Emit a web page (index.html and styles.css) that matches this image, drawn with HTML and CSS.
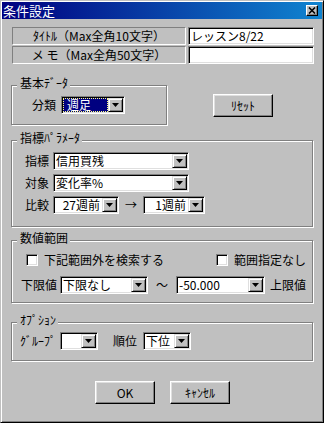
FILE: index.html
```html
<!DOCTYPE html>
<html lang="ja">
<head>
    <meta charset="UTF-8">
    <title>条件設定</title>
    <link rel="stylesheet" href="styles.css">
</head>
<body>
    <div class="window">
        <div class="titlebar">
            <span class="title">条件設定</span>
            <span class="close">
                <svg width="8" height="7" viewBox="0 0 8 7"><path d="M1 0.5 L7 6.5 M7 0.5 L1 6.5" stroke="#000" stroke-width="1.6" fill="none"/></svg>
            </span>
        </div>

        <div class="content">
            <div class="field-row">
                <div class="static">ﾀｲﾄﾙ（Max全角10文字）</div>
                <div class="input">レッスン8/22</div>
            </div>
            <div class="field-row">
                <div class="static">メ モ（Max全角50文字）</div>
                <div class="input"></div>
            </div>

            <!-- basic data + reset -->
            <div class="basic-row">
                <div class="group group-basic">
                    <span class="legend">基本ﾃﾞｰﾀ</span>
                    <div class="line line-basic">
                        <span class="label lbl-class">分類</span>
                        <div class="combo combo-class">
                            <span class="val selected">週足</span><span class="drop"></span>
                        </div>
                    </div>
                </div>
                <button class="btn btn-reset">ﾘｾｯﾄ</button>
            </div>

            <!-- indicator params -->
            <div class="group group-param">
                <span class="legend">指標ﾊﾟﾗﾒｰﾀ</span>
                <div class="line">
                    <span class="label lbl-param">指標</span>
                    <div class="combo combo-wide"><span class="val">信用買残</span><span class="drop"></span></div>
                </div>
                <div class="line">
                    <span class="label lbl-param">対象</span>
                    <div class="combo combo-wide"><span class="val">変化率%</span><span class="drop"></span></div>
                </div>
                <div class="line">
                    <span class="label lbl-param">比較</span>
                    <div class="combo combo-from"><span class="val right">27週前</span><span class="drop"></span></div>
                    <span class="sep sep-arrow">→</span>
                    <div class="combo combo-to"><span class="val right">1週前</span><span class="drop"></span></div>
                </div>
            </div>

            <!-- numeric range -->
            <div class="group group-range">
                <span class="legend">数値範囲</span>
                <div class="line line-checks">
                    <label class="check-item check-first"><span class="box"></span>下記範囲外を検索する</label>
                    <label class="check-item"><span class="box"></span>範囲指定なし</label>
                </div>
                <div class="line line-limits">
                    <span class="label lbl-limit">下限値</span>
                    <div class="combo combo-limit"><span class="val">下限なし</span><span class="drop"></span></div>
                    <span class="sep sep-tilde">～</span>
                    <div class="combo combo-limit2"><span class="val">-50.000</span><span class="drop"></span></div>
                    <span class="label lbl-upper">上限値</span>
                </div>
            </div>

            <!-- options -->
            <div class="group group-option">
                <span class="legend">ｵﾌﾟｼｮﾝ</span>
                <div class="line line-option">
                    <span class="label lbl-group">ｸﾞﾙｰﾌﾟ</span>
                    <div class="combo combo-group"><span class="val"></span><span class="drop"></span></div>
                    <span class="label lbl-rank">順位</span>
                    <div class="combo combo-rank"><span class="val">下位</span><span class="drop"></span></div>
                </div>
            </div>

            <div class="buttons">
                <button class="btn">OK</button>
                <button class="btn">ｷｬﾝｾﾙ</button>
            </div>
        </div>
    </div>
</body>
</html>
```

FILE: styles.css
```css
* {
    margin: 0;
    padding: 0;
    box-sizing: border-box;
}

body {
    background: #c0c0c0;
    font-family: "Noto Sans CJK JP", "Noto Sans", sans-serif;
    font-size: 12px;
    color: #000;
}

.window {
    width: 324px;
    height: 423px;
    background: #c0c0c0;
    border: 1px solid;
    border-color: #c0c0c0 #000 #000 #c0c0c0;
    box-shadow: inset 1px 1px #fff, inset -1px -1px #808080;
    padding: 1px;
}

.titlebar {
    height: 17px;
    display: flex;
    align-items: center;
    justify-content: space-between;
    background: linear-gradient(to right, #000080, #1084d0);
    color: #fff;
}

.title {
    font-size: 13px;
    line-height: 17px;
    padding-left: 1px;
}

.close {
    width: 12px;
    height: 11px;
    margin-right: 4px;
    background: #c0c0c0;
    border: 1px solid;
    border-color: #fff #000 #000 #fff;
    box-shadow: inset -1px -1px #808080;
    display: flex;
    align-items: center;
    justify-content: center;
}

.close svg {
    display: block;
}

.content {
    padding: 8px 8px 0 9px;
}

/* title / memo rows */
.field-row {
    display: flex;
    gap: 2px;
    height: 18px;
    margin-left: 1px;
}

.field-row + .field-row {
    margin-top: 1px;
}

.static {
    width: 174px;
    border: 1px solid;
    border-color: #808080 #fff #fff #808080;
    text-align: center;
    line-height: 16px;
}

.input {
    flex: 1;
    background: #fff;
    border: 1px solid;
    border-color: #808080 #fff #fff #808080;
    box-shadow: inset 1px 1px #000, inset -1px -1px #dfdfdf;
    padding: 1px 2px;
    line-height: 14px;
}

/* group boxes */
.group {
    position: relative;
    border: 1px solid #808080;
    box-shadow: inset 1px 1px #fff, 1px 1px #fff;
    margin-right: 1px;
}

.legend {
    position: absolute;
    top: -10px;
    left: 5px;
    padding: 0 2px 0 3px;
    line-height: 14px;
    background: #c0c0c0;
}

.line {
    display: flex;
    align-items: center;
}

.label {
    flex: none;
    line-height: 14px;
    white-space: nowrap;
}

.sep {
    flex: none;
    text-align: center;
    line-height: 14px;
}

/* combo box */
.combo {
    flex: none;
    display: flex;
    height: 18px;
    background: #fff;
    border: 1px solid;
    border-color: #808080 #fff #fff #808080;
    box-shadow: inset 1px 1px #000, inset -1px -1px #dfdfdf;
    padding: 1px;
}

.combo .val {
    flex: 1;
    line-height: 14px;
    white-space: nowrap;
    padding-left: 1px;
}

.combo .val.right {
    text-align: right;
    padding-right: 2px;
}

.combo .val.selected {
    background: #000080;
    color: #fff;
    outline: 1px dotted #ffff80;
    outline-offset: -1px;
    padding-left: 4px;
}

.drop {
    width: 15px;
    flex: none;
    background: #c0c0c0;
    border: 1px solid;
    border-color: #dfdfdf #000 #000 #dfdfdf;
    box-shadow: inset 1px 1px #fff, inset -1px -1px #808080;
    display: flex;
    align-items: center;
    justify-content: center;
}

.drop::after {
    content: "";
    width: 7px;
    height: 4px;
    background: #000;
    clip-path: polygon(0 0, 100% 0, 50% 100%);
}

/* buttons */
.btn {
    width: 60px;
    height: 23px;
    background: #c0c0c0;
    border: 1px solid;
    border-color: #fff #000 #000 #fff;
    box-shadow: inset -1px -1px #808080, inset 1px 1px #dfdfdf;
    font: inherit;
    color: #000;
}

/* basic data */
.basic-row {
    display: flex;
    align-items: center;
    margin-top: 21px;
}

.group-basic {
    width: 156px;
    padding: 10px 0;
    margin-right: 0;
}

.line-basic {
    padding-left: 20px;
}

.lbl-class {
    width: 29px;
}

.combo-class {
    width: 64px;
}

.btn-reset {
    margin-left: 46px;
}

/* indicator params */
.group-param {
    margin-top: 15px;
    padding: 11px 0 12px 13px;
    display: flex;
    flex-direction: column;
    gap: 4px;
}

.lbl-param {
    width: 28px;
}

.combo-wide {
    width: 136px;
}

.combo-from {
    width: 66px;
}

.sep-arrow {
    width: 24px;
}

.combo-to {
    width: 62px;
}

/* numeric range */
.group-range {
    margin-top: 13px;
    padding: 12px 0 8px;
}

.line-checks {
    height: 14px;
    padding-left: 14px;
}

.check-item {
    display: flex;
    align-items: center;
    line-height: 14px;
}

.check-first {
    width: 190px;
}

.box {
    width: 12px;
    height: 12px;
    margin-right: 6px;
    background: #fff;
    border: 1px solid;
    border-color: #808080 #fff #fff #808080;
    box-shadow: inset 1px 1px #000, inset -1px -1px #dfdfdf;
}

.line-limits {
    margin-top: 9px;
    padding-left: 9px;
}

.lbl-limit {
    width: 39px;
}

.combo-limit {
    width: 88px;
}

.sep-tilde {
    width: 28px;
}

.combo-limit2 {
    width: 89px;
}

.lbl-upper {
    margin-left: 5px;
}

/* options */
.group-option {
    margin-top: 19px;
    padding: 9px 0 10px;
}

.line-option {
    padding-left: 8px;
}

.lbl-group {
    width: 40px;
}

.combo-group {
    width: 38px;
}

.lbl-rank {
    width: 30px;
    margin-left: 15px;
}

.combo-rank {
    width: 48px;
}

.buttons {
    display: flex;
    justify-content: center;
    gap: 15px;
    margin-top: 20px;
}
```
